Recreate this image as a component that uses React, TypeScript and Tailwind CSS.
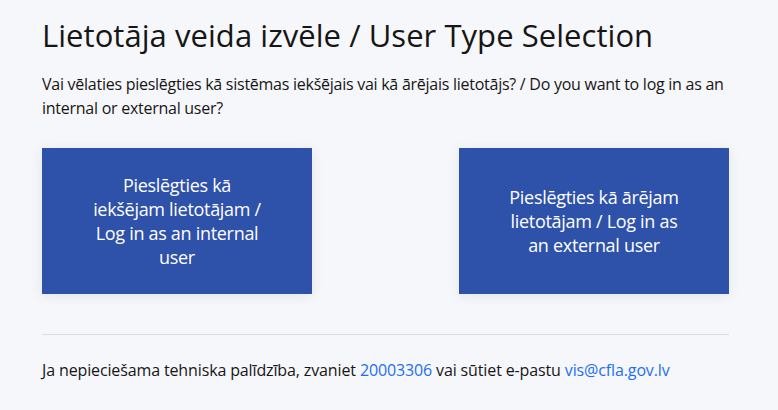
export default function App() {
  return (
    <div className="min-h-[410px] w-full bg-[#f6f7fb] text-[#161616]" style={{ fontFamily: '"Open Sans", "Noto Sans", sans-serif' }}>
      <main className="ml-[42px] w-[687px] pt-[15px]">
        <h1 className="text-[31px] leading-[40px] font-normal tracking-[0.05px]">Lietotāja veida izvēle / User Type Selection</h1>
        <p className="mt-[17px] text-[16px] leading-[24px] tracking-[-0.26px]">
          Vai vēlaties pieslēgties kā sistēmas iekšējais vai kā ārējais lietotājs? / Do you want to log in as an internal or external user?
        </p>
        <div className="mt-[28px] flex justify-between">
          <button className="flex h-[146px] w-[270px] items-center justify-center bg-[#2e51aa] px-[45px] text-center text-[18px] leading-[24px] tracking-[-0.3px] text-white shadow-[0_2px_12px_rgba(0,0,0,0.08)]">
            Pieslēgties kā iekšējam lietotājam / Log in as an internal user
          </button>
          <button className="flex h-[146px] w-[270px] items-center justify-center bg-[#2e51aa] px-[45px] text-center text-[18px] leading-[24px] tracking-[-0.3px] text-white shadow-[0_2px_12px_rgba(0,0,0,0.08)]">
            Pieslēgties kā ārējam lietotājam / Log in as an external user
          </button>
        </div>
        <hr className="mt-[40px] border-t border-[#dcdde2]" />
        <p className="mt-[23px] text-[16px] leading-[24px] tracking-[-0.13px]">
          Ja nepieciešama tehniska palīdzība, zvaniet{" "}
          <a href="#" className="text-[#1d6ff2]">20003306</a> vai sūtiet e-pastu{" "}
          <a href="#" className="text-[#1d6ff2]">vis@cfla.gov.lv</a>
        </p>
      </main>
    </div>
  );
}
